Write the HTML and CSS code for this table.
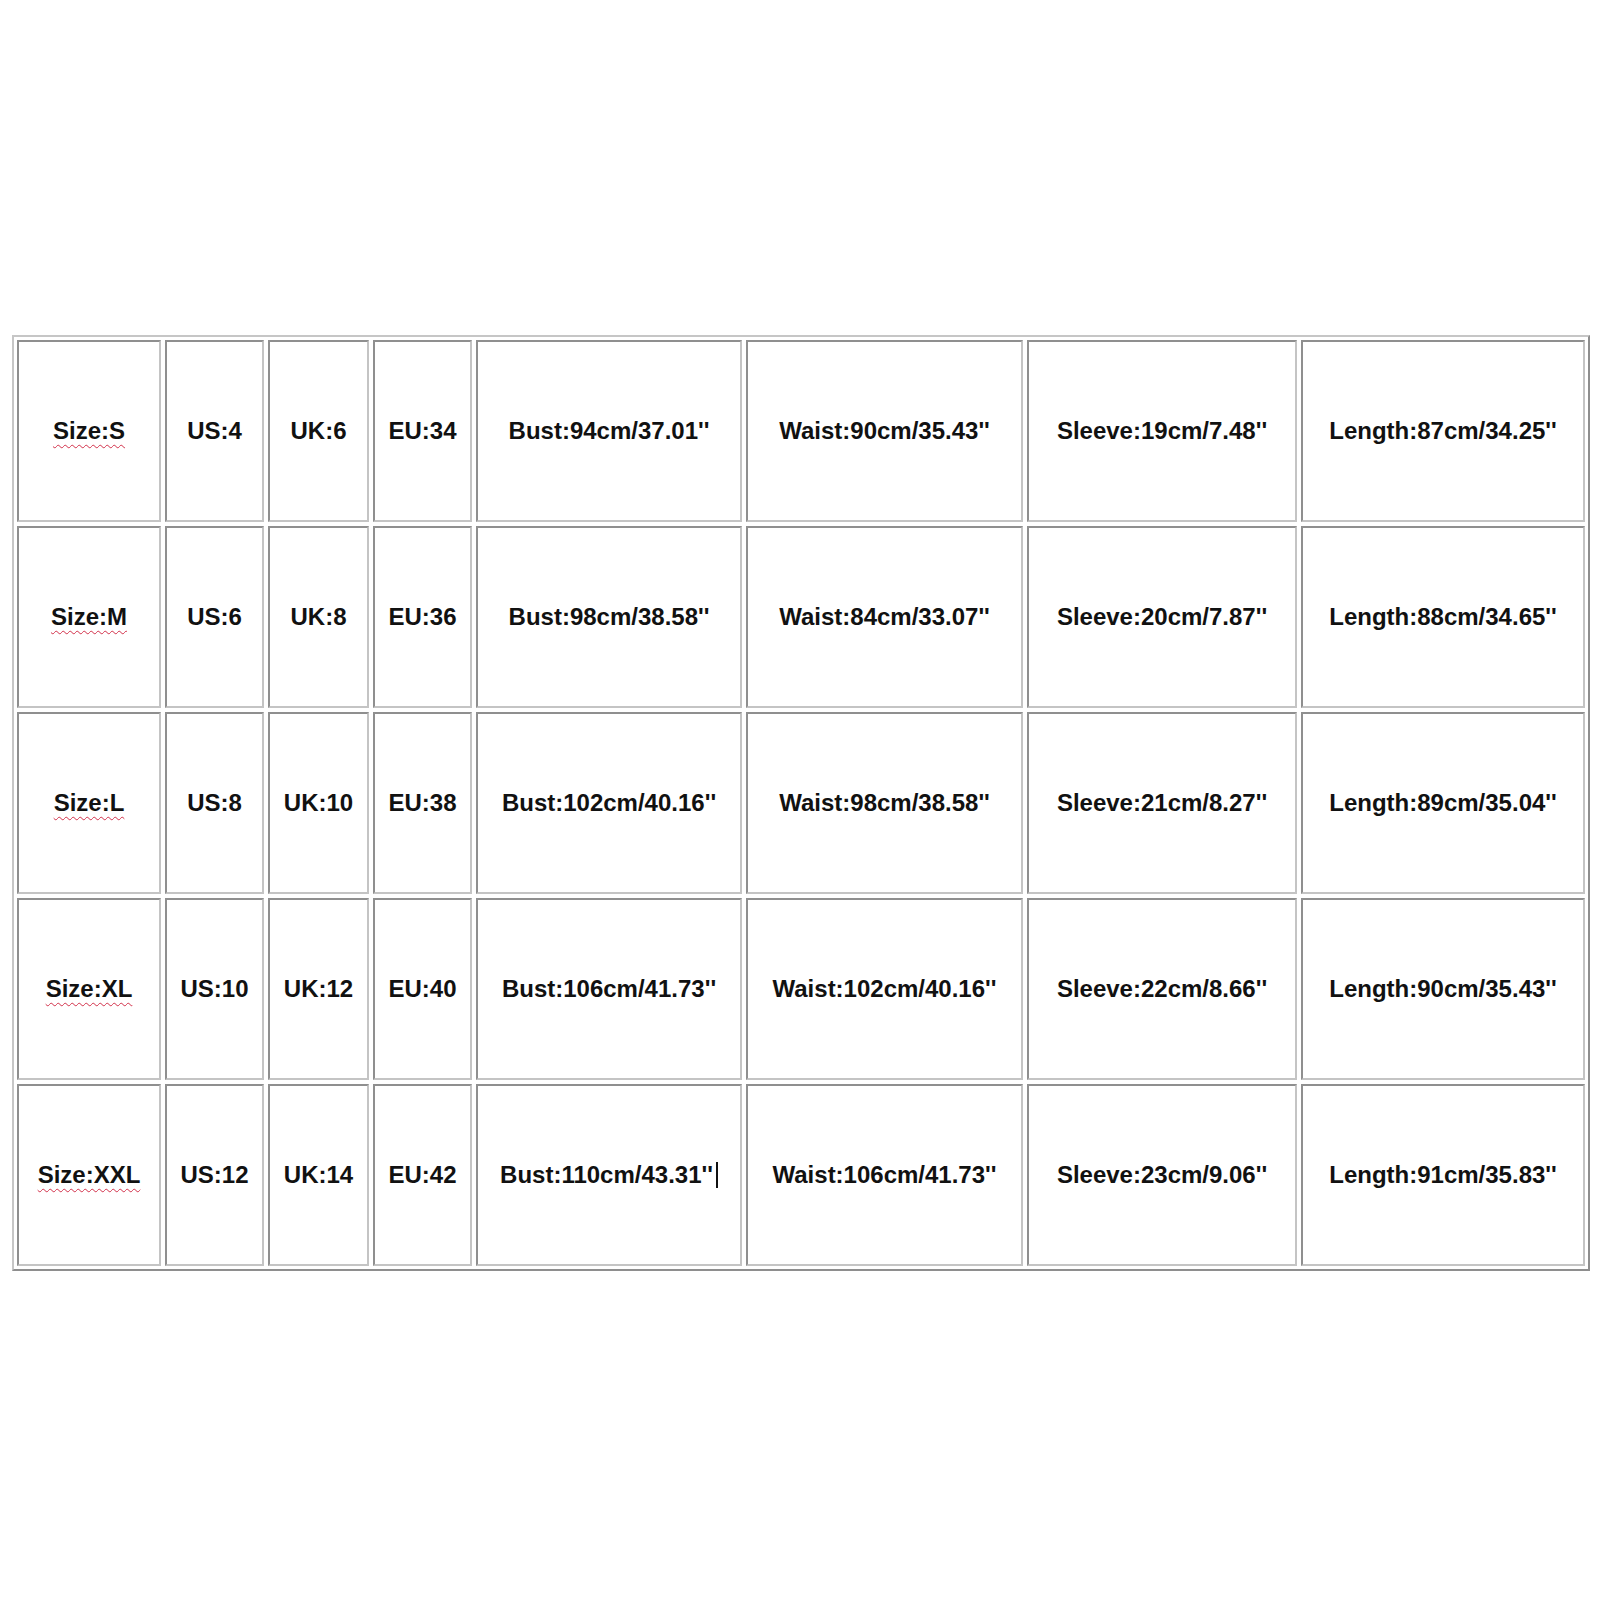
FILE: index.html
```html
<!DOCTYPE html>
<html>
<head>
<meta charset="utf-8">
<link rel="stylesheet" href="styles.css">
</head>
<body>
<div class="page">
  <div class="chart">
    <div class="cell"><span class="spell">Size:S</span></div>
    <div class="cell">US:4</div>
    <div class="cell">UK:6</div>
    <div class="cell">EU:34</div>
    <div class="cell">Bust:94cm/37.01''</div>
    <div class="cell">Waist:90cm/35.43''</div>
    <div class="cell">Sleeve:19cm/7.48''</div>
    <div class="cell">Length:87cm/34.25''</div>

    <div class="cell"><span class="spell">Size:M</span></div>
    <div class="cell">US:6</div>
    <div class="cell">UK:8</div>
    <div class="cell">EU:36</div>
    <div class="cell">Bust:98cm/38.58''</div>
    <div class="cell">Waist:84cm/33.07''</div>
    <div class="cell">Sleeve:20cm/7.87''</div>
    <div class="cell">Length:88cm/34.65''</div>

    <div class="cell"><span class="spell">Size:L</span></div>
    <div class="cell">US:8</div>
    <div class="cell">UK:10</div>
    <div class="cell">EU:38</div>
    <div class="cell">Bust:102cm/40.16''</div>
    <div class="cell">Waist:98cm/38.58''</div>
    <div class="cell">Sleeve:21cm/8.27''</div>
    <div class="cell">Length:89cm/35.04''</div>

    <div class="cell"><span class="spell">Size:XL</span></div>
    <div class="cell">US:10</div>
    <div class="cell">UK:12</div>
    <div class="cell">EU:40</div>
    <div class="cell">Bust:106cm/41.73''</div>
    <div class="cell">Waist:102cm/40.16''</div>
    <div class="cell">Sleeve:22cm/8.66''</div>
    <div class="cell">Length:90cm/35.43''</div>

    <div class="cell"><span class="spell">Size:XXL</span></div>
    <div class="cell">US:12</div>
    <div class="cell">UK:14</div>
    <div class="cell">EU:42</div>
    <div class="cell">Bust:110cm/43.31''<span class="caret"></span></div>
    <div class="cell">Waist:106cm/41.73''</div>
    <div class="cell">Sleeve:23cm/9.06''</div>
    <div class="cell">Length:91cm/35.83''</div>
  </div>
</div>
</body>
</html>
```

FILE: styles.css
```css
html, body {
  margin: 0;
  padding: 0;
  background: #ffffff;
}

.page {
  width: 1600px;
  height: 1600px;
  padding: 335px 0 0 12px;
  box-sizing: border-box;
  font-family: "Liberation Sans", Arial, sans-serif;
}

.chart {
  display: inline-grid;
  grid-template-columns: 144px 99px 101px 99px 266px 277px 270px 284px;
  grid-auto-rows: 182px;
  gap: 4px;
  padding: 3px;
  border: 2px solid;
  border-color: #c6c6c6 #8e8e8e #8e8e8e #c6c6c6;
}

.cell {
  box-sizing: border-box;
  border: 2px solid;
  border-color: #8f8f8f #c4c4c4 #c4c4c4 #8f8f8f;
  display: flex;
  align-items: center;
  justify-content: center;
  font-size: 24px;
  font-weight: bold;
  color: #111111;
  white-space: nowrap;
}

.spell {
  text-decoration: underline wavy #d2304a;
  text-decoration-thickness: 1px;
  text-underline-offset: 5px;
}

.caret {
  display: inline-block;
  width: 2px;
  height: 26px;
  margin-left: 3px;
  background: #111111;
  vertical-align: -5px;
}
```
